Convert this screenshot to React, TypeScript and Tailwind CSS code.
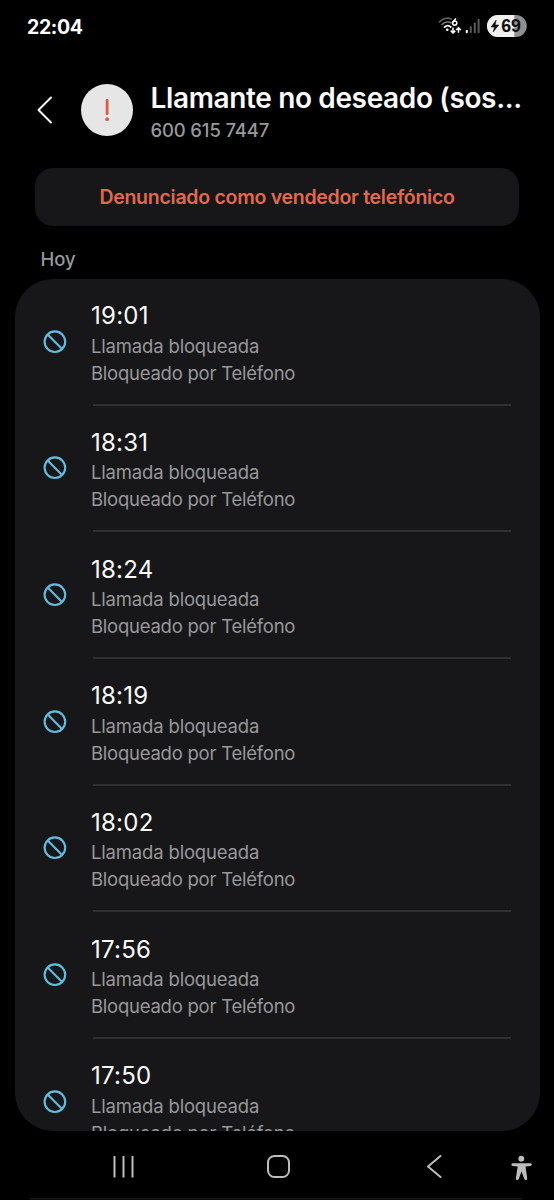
const CALLS = ['19:01', '18:31', '18:24', '18:19', '18:02', '17:56', '17:50'];

function StatusIcons() {
  return (
    <svg width="90" height="24" viewBox="437 14 90 24" fill="none" aria-hidden="true">
      <g strokeLinecap="round">
        <path d="M439.5 21.8C443.5 17.8 448.5 17.6 451.2 18.9" stroke="#5c5c5c" strokeWidth="1.7" />
        <path d="M442 24.5C444.8 21.7 448.6 21.4 451 22.8" stroke="#777" strokeWidth="1.7" />
        <path d="M444.6 27.1C446.5 25.3 449 25.3 450.8 27" stroke="#fff" strokeWidth="1.8" />
      </g>
      <circle cx="447.3" cy="29.8" r="1.3" fill="#fff" />
      <path d="M455.8 18.4L453.1 22.2" stroke="#fff" strokeWidth="1.6" />
      <circle cx="454.7" cy="23.1" r="2.1" stroke="#fff" strokeWidth="1.5" />
      <path d="M453 27.4V33M450.7 30.6L453 32.9L455.3 30.6M458.5 32.8V27.7M456.2 30L458.5 27.7L460.8 30" stroke="#fff" strokeWidth="1.5" />
      <rect x="465.8" y="30" width="2" height="3.2" rx=".6" fill="#fff" />
      <rect x="469.8" y="26.2" width="2" height="7" rx=".6" fill="#595959" />
      <rect x="473.8" y="22.6" width="2" height="10.6" rx=".6" fill="#595959" />
      <rect x="477.6" y="19" width="2" height="14.2" rx=".6" fill="#595959" />
      <clipPath id="battery"><rect x="487" y="15" width="39.8" height="22" rx="11" /></clipPath>
      <g clipPath="url(#battery)">
        <rect x="487" y="15" width="40" height="22" fill="#909090" />
        <rect x="487" y="15" width="27.3" height="22" fill="#f0f0f0" />
      </g>
      <path d="M496.2 20L491 27.1H494.4L493.2 32L498.7 25H495.2Z" fill="#111" stroke="#111" strokeWidth=".5" strokeLinejoin="round" />
      <text x="501.2" y="32.1" fontFamily="Liberation Sans, sans-serif" fontSize="17.8" fontWeight="700" fill="#111">69</text>
    </svg>
  );
}

function BlockedIcon() {
  return (
    <svg className="shrink-0" width="24" height="24" viewBox="0 0 24 24" fill="none" stroke="#60bde0" strokeWidth="2.1" aria-hidden="true">
      <circle cx="11.9" cy="11.7" r="10.3" />
      <path d="M4.7 4.5L19.1 18.9" />
    </svg>
  );
}

function CallRow({ time, last }: { time: string; last: boolean }) {
  return (
    <li className="flex h-[126.7px] shrink-0 pl-7">
      <div className="flex w-[48.5px] shrink-0 pt-[50.5px]">
        <BlockedIcon />
      </div>
      <div className="flex w-[420px] flex-col justify-between">
        <div className="pt-[21.3px]">
          <p className="text-[24px] leading-[31px] tracking-[0.25px] text-[#fafafa]">{time}</p>
          <p className="pt-[1.3px] text-[18.5px] leading-[27px] tracking-[-0.17px] text-[#98989a]">Llamada bloqueada</p>
          <p className="text-[18.5px] leading-[27px] tracking-[-0.24px] text-[#98989a]">Bloqueado por Teléfono</p>
        </div>
        {!last && <div className="ml-[2px] h-[2px] bg-[#303032]" />}
      </div>
    </li>
  );
}

export default function App() {
  return (
    <main className="flex h-[1200px] w-[554px] flex-col overflow-hidden bg-black font-['Inter',sans-serif]">
      <div className="flex h-[52px] shrink-0 items-center justify-between pr-[27px] pl-[27px]">
        <span className="pt-[3px] text-[19.5px] font-bold tracking-[-0.4px] text-white">22:04</span>
        <StatusIcons />
      </div>

      <header className="flex h-[116px] shrink-0 items-center pl-[34px]">
        <svg width="20" height="30" viewBox="0 0 20 30" fill="none" stroke="#f5f5f5" strokeWidth="2" strokeLinecap="round" strokeLinejoin="round" aria-label="Atrás">
          <path d="M17 2.5L4.5 15L17 27.5" />
        </svg>
        <div className="ml-[27px] flex size-[52px] shrink-0 items-center justify-center rounded-full bg-[#e6e6e6]">
          <svg width="6" height="26" viewBox="0 0 6 26" aria-hidden="true">
            <rect x="1.7" y="2" width="2.8" height="16" rx="1.2" fill="#dd5a43" />
            <circle cx="3.1" cy="22.2" r="1.9" fill="#dd5a43" />
          </svg>
        </div>
        <div className="ml-[17.5px] pt-[4px] whitespace-nowrap">
          <h1 className="text-[28px] leading-[36px] font-semibold tracking-[-0.36px] text-[#fafafa]">Llamante no deseado (sos...</h1>
          <p className="text-[18.5px] leading-[28px] font-medium tracking-[-0.15px] text-[#98989a]">600 615 7447</p>
        </div>
      </header>

      <div className="mx-[35px] flex h-[58px] shrink-0 items-center justify-center rounded-[18px] bg-[#171719]">
        <span className="pt-[2px] text-[19.5px] font-semibold tracking-[-0.27px] whitespace-nowrap text-[#e4694b]">Denunciado como vendedor telefónico</span>
      </div>

      <h2 className="flex h-[53px] shrink-0 items-center pt-[15px] pl-[40.5px] text-[18.5px] font-medium tracking-[-0.1px] text-[#98989a]">Hoy</h2>

      <ul className="mx-[14.5px] flex h-[851.5px] shrink-0 flex-col overflow-hidden rounded-[38px] bg-[#171719]">
        {CALLS.map((time, i) => (
          <CallRow key={time} time={time} last={i === CALLS.length - 1} />
        ))}
      </ul>

      <nav className="flex min-h-0 flex-1 items-start">
        <svg width="554" height="69" viewBox="0 1131 554 69" fill="none" stroke="#bdbdbd" strokeWidth="2" aria-hidden="true">
          <path d="M114.5 1156V1177.5M123.5 1156V1177.5M132.5 1156V1177.5" />
          <rect x="268" y="1156" width="21" height="21" rx="6.5" />
          <path d="M440.5 1156L428 1166.5L440.5 1177" strokeLinecap="round" strokeLinejoin="round" />
          <g fill="#bdbdbd" stroke="none">
            <circle cx="521.3" cy="1158.7" r="2.9" />
            <path d="M512.8 1163.2H530.4A1.4 1.4 0 0 1 530.4 1166L525.5 1166.5L527.2 1178A1.5 1.5 0 0 1 524.3 1179L521.5 1171.6L518.8 1179A1.5 1.5 0 0 1 515.9 1178L517.7 1166.5L512.8 1166A1.4 1.4 0 0 1 512.8 1163.2Z" />
          </g>
          <path d="M30 1198.7H522" stroke="#19191a" strokeWidth="1.4" />
        </svg>
      </nav>
    </main>
  );
}
